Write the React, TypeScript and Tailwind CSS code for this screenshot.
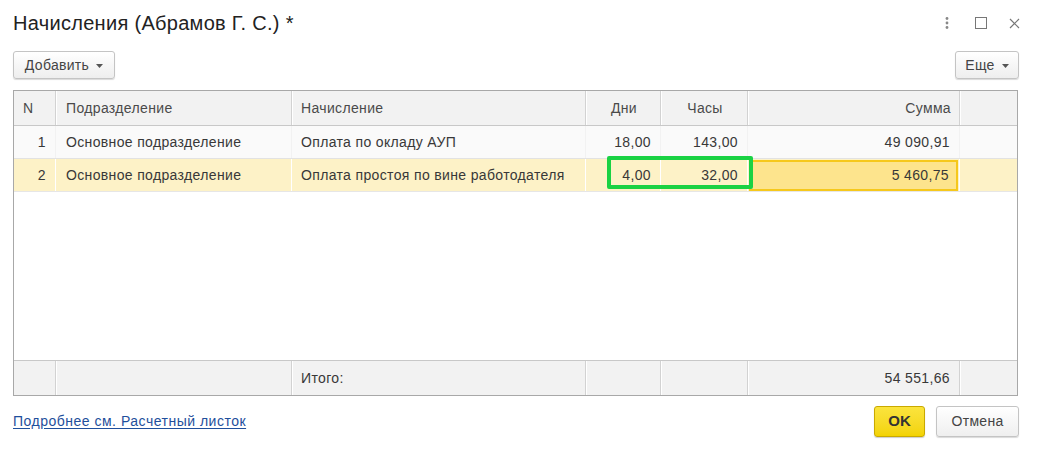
import React from "react";

const W = ["w-[42px]", "w-[236px]", "w-[294px]", "w-[75px]", "w-[87px]", "w-[212px]", "w-[57px]"];

function Arrow() {
  return (
    <svg width="7" height="4" viewBox="0 0 7 4" className="ml-[7px] mt-[2px]">
      <path d="M0 0 L7 0 L3.5 4 Z" fill="#555" />
    </svg>
  );
}

export default function App() {
  return (
    <div
      className="w-[1042px] h-[450px] bg-white text-[#383838] flex flex-col pl-[13px] pr-[24px] overflow-hidden"
      style={{ fontFamily: '"Liberation Sans", Arial, sans-serif' }}
    >
      {/* Title bar */}
      <div className="h-[44px] flex items-center justify-between">
        <div className="text-[20px] text-[#222] pt-[1px] tracking-[0.3px]">Начисления (Абрамов Г. С.) *</div>
        <div className="flex items-center mr-[-2px] mt-[2px]">
          <svg width="4" height="12" viewBox="0 0 4 12">
            <circle cx="2" cy="1.5" r="1.4" fill="#888" />
            <circle cx="2" cy="6" r="1.4" fill="#888" />
            <circle cx="2" cy="10.5" r="1.4" fill="#888" />
          </svg>
          <div className="w-[12px] h-[12px] border border-[#777] ml-[26px]" />
          <svg width="11" height="11" viewBox="0 0 11 11" className="ml-[22px]">
            <path d="M1 1 L10 10 M10 1 L1 10" stroke="#777" strokeWidth="1.2" />
          </svg>
        </div>
      </div>

      {/* Toolbar */}
      <div className="mt-[7px] h-[28px] flex items-center justify-between tracking-[0.3px]">
        <button className="w-[102px] h-[28px] flex items-center justify-center border border-[#c4c4c4] rounded-[3px] bg-linear-to-b from-white to-[#eeeeee] shadow-[0_1px_1px_rgba(0,0,0,0.15)] text-[14px] text-[#444]">
          Добавить
          <Arrow />
        </button>
        <button className="w-[64px] h-[28px] flex items-center justify-center border border-[#c4c4c4] rounded-[3px] bg-linear-to-b from-white to-[#eeeeee] shadow-[0_1px_1px_rgba(0,0,0,0.15)] text-[14px] text-[#444] mr-[-1px]">
          Еще
          <Arrow />
        </button>
      </div>

      {/* Table */}
      <div className="mt-[11px] w-[1005px] h-[306px] border border-[#a8a8a8] flex flex-col text-[14px] tracking-[0.35px]">
        {/* Header */}
        <div className="h-[35px] flex bg-[#f2f2f2] border-b border-[#c8c8c8] text-[#4a4a4a]">
          <div className={`${W[0]} border-r border-[#d2d2d2] flex items-center pl-[9px]`}>N</div>
          <div className={`${W[1]} border-r border-[#d2d2d2] shadow-[inset_1px_0_0_#fff] flex items-center pl-[10px]`}>Подразделение</div>
          <div className={`${W[2]} border-r border-[#d2d2d2] shadow-[inset_1px_0_0_#fff] flex items-center pl-[9px]`}>Начисление</div>
          <div className={`${W[3]} border-r border-[#d2d2d2] shadow-[inset_1px_0_0_#fff] flex items-center justify-center pl-[2px]`}>Дни</div>
          <div className={`${W[4]} border-r border-[#d2d2d2] shadow-[inset_1px_0_0_#fff] flex items-center justify-center pl-[2px]`}>Часы</div>
          <div className={`${W[5]} border-r border-[#d2d2d2] shadow-[inset_1px_0_0_#fff] flex items-center justify-end pr-[8px]`}>Сумма</div>
          <div className={`${W[6]} shadow-[inset_1px_0_0_#fff]`} />
        </div>

        {/* Body */}
        <div className="flex-1 bg-white flex flex-col">
          <div className="h-[33px] flex bg-[#fafafa] border-b border-[#e2e2e2]">
            <div className={`${W[0]} border-r border-[#f2f2f2] flex items-center justify-end pr-[9px]`}>1</div>
            <div className={`${W[1]} border-r border-[#f2f2f2] flex items-center pl-[10px]`}>Основное подразделение</div>
            <div className={`${W[2]} border-r border-[#f2f2f2] flex items-center pl-[9px]`}>Оплата по окладу АУП</div>
            <div className={`${W[3]} border-r border-[#f2f2f2] flex items-center justify-end pr-[9px]`}>18,00</div>
            <div className={`${W[4]} border-r border-[#f2f2f2] flex items-center justify-end pr-[9px]`}>143,00</div>
            <div className={`${W[5]} border-r border-[#f2f2f2] flex items-center justify-end pr-[9px]`}>49 090,91</div>
            <div className={W[6]} />
          </div>
          <div className="h-[33px] flex bg-[#fdf2c7] border-b border-[#e6e6e6]">
            <div className={`${W[0]} border-r border-white flex items-center justify-end pr-[9px]`}>2</div>
            <div className={`${W[1]} border-r border-white flex items-center pl-[10px]`}>Основное подразделение</div>
            <div className={`${W[2]} border-r border-white flex items-center pl-[9px]`}>Оплата простоя по вине работодателя</div>
            <div className="flex relative">
              <div className={`${W[3]} border-r border-white flex items-center justify-end pr-[9px]`}>4,00</div>
              <div className={`${W[4]} border-r border-white flex items-center justify-end pr-[9px]`}>32,00</div>
              <div className="absolute left-[21px] right-[-5px] top-[-3px] bottom-[2px] border-[4px] border-[#1ad243] rounded-[2px]" />
            </div>
            <div className={`${W[5]} border-r border-white flex pl-[1px] pr-[1px] pt-[1px]`}>
              <div className="flex-1 border-2 border-[#f6c81c] bg-[#fde48d] flex items-center justify-end pr-[7px]">5 460,75</div>
            </div>
            <div className={W[6]} />
          </div>
        </div>

        {/* Footer */}
        <div className="h-[35px] flex bg-[#f2f2f2] border-t border-[#c8c8c8]">
          <div className={`${W[0]} border-r border-[#d2d2d2]`} />
          <div className={`${W[1]} border-r border-[#d2d2d2] shadow-[inset_1px_0_0_#fff]`} />
          <div className={`${W[2]} border-r border-[#d2d2d2] shadow-[inset_1px_0_0_#fff] flex items-center pl-[9px]`}>Итого:</div>
          <div className={`${W[3]} border-r border-[#d2d2d2] shadow-[inset_1px_0_0_#fff]`} />
          <div className={`${W[4]} border-r border-[#d2d2d2] shadow-[inset_1px_0_0_#fff]`} />
          <div className={`${W[5]} border-r border-[#d2d2d2] shadow-[inset_1px_0_0_#fff] flex items-center justify-end pr-[9px]`}>54 551,66</div>
          <div className={`${W[6]} shadow-[inset_1px_0_0_#fff]`} />
        </div>
      </div>

      {/* Bottom bar */}
      <div className="mt-[10px] h-[30px] flex items-center justify-between">
        <a className="text-[14px] text-[#1f4f9c] underline underline-offset-2 tracking-[0.5px]">Подробнее см. Расчетный листок</a>
        <div className="flex items-center mr-[-1px]">
          <button className="w-[51px] h-[31px] border border-[#c9a900] rounded-[3px] bg-linear-to-b from-[#fbe43c] to-[#f3d300] shadow-[0_1px_1px_rgba(0,0,0,0.2)] text-[15px] font-bold text-[#333]">
            OK
          </button>
          <button className="ml-[11px] w-[83px] h-[31px] border border-[#c4c4c4] rounded-[3px] bg-linear-to-b from-white to-[#efefef] shadow-[0_1px_1px_rgba(0,0,0,0.15)] text-[14px] text-[#444] tracking-[0.3px]">
            Отмена
          </button>
        </div>
      </div>
    </div>
  );
}
